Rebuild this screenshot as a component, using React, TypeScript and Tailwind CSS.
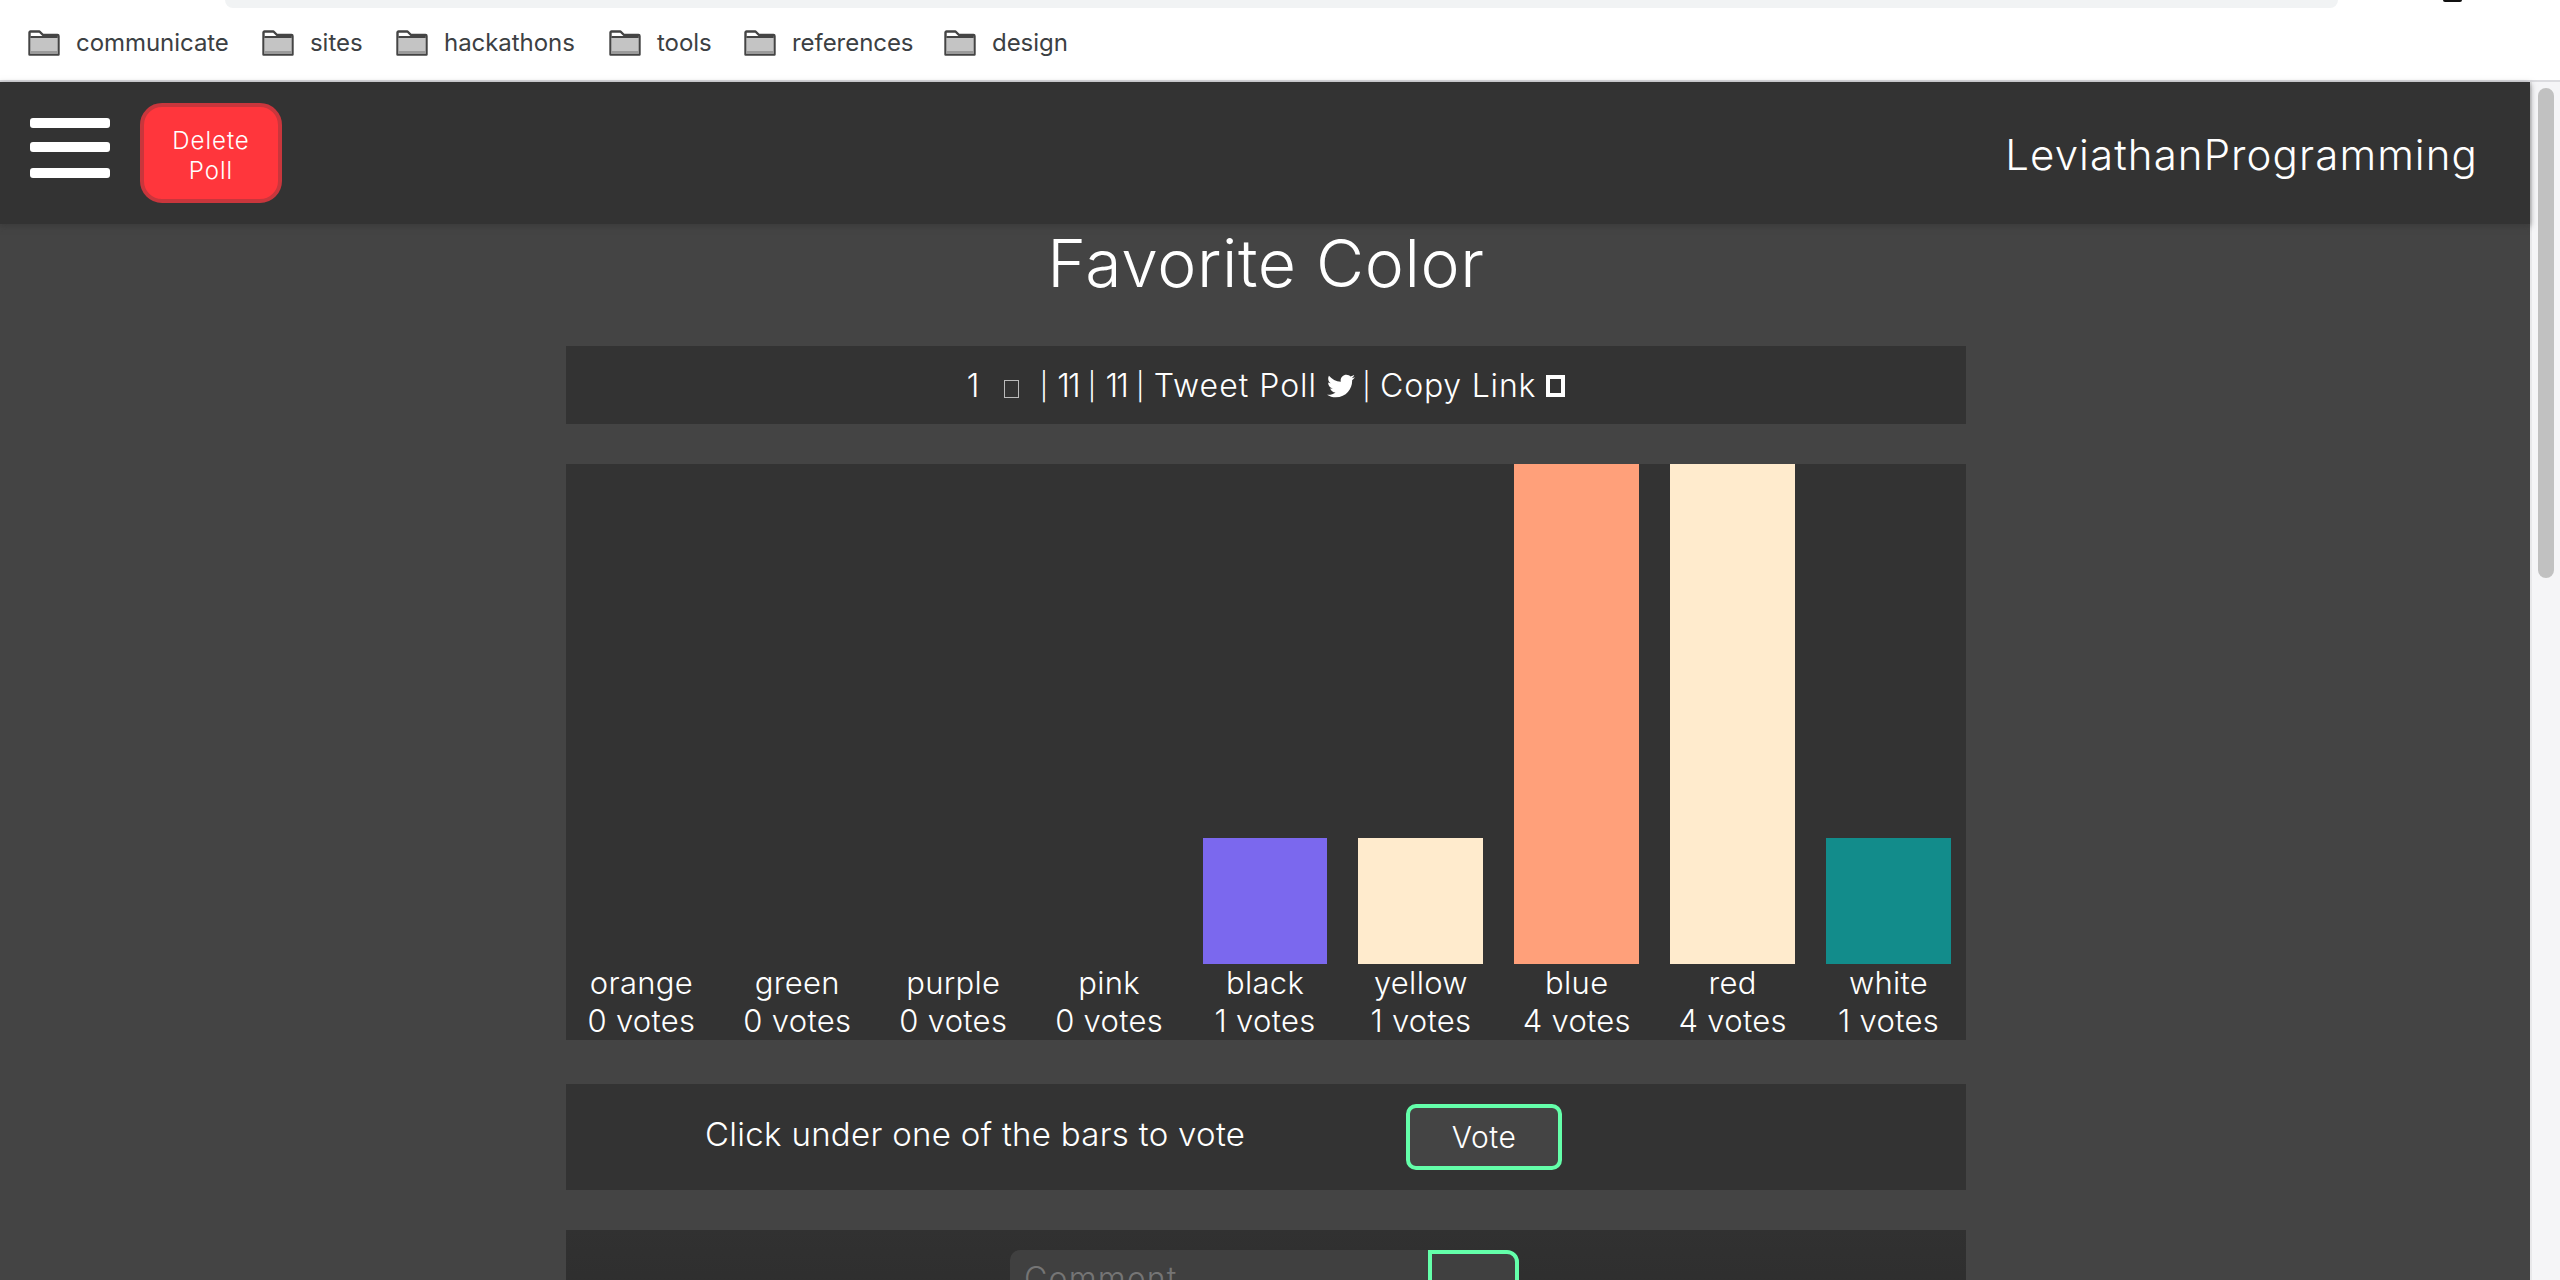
import { FaTwitter } from "react-icons/fa";

const bookmarks = [
  { label: "communicate", w: "w-[234px]" },
  { label: "sites", w: "w-[134px]" },
  { label: "hackathons", w: "w-[213px]" },
  { label: "tools", w: "w-[135px]" },
  { label: "references", w: "w-[200px]" },
  { label: "design", w: "w-[124px]" },
];

const bars = [
  { name: "orange", votes: 0, color: "bg-transparent", h: "h-0" },
  { name: "green", votes: 0, color: "bg-transparent", h: "h-0" },
  { name: "purple", votes: 0, color: "bg-transparent", h: "h-0" },
  { name: "pink", votes: 0, color: "bg-transparent", h: "h-0" },
  { name: "black", votes: 1, color: "bg-[#7b68ee]", h: "h-[126px]" },
  { name: "yellow", votes: 1, color: "bg-[#ffebcd]", h: "h-[126px]" },
  { name: "blue", votes: 4, color: "bg-[#ffa07a]", h: "h-[500px]" },
  { name: "red", votes: 4, color: "bg-[#ffebcd]", h: "h-[500px]" },
  { name: "white", votes: 1, color: "bg-[#128c8b]", h: "h-[126px]" },
];

function Folder() {
  return (
    <svg width="32" height="26" viewBox="0 0 32 26" className="shrink-0">
      <path d="M1.5 24.5V2.5a1 1 0 0 1 1-1h9l3.5 3.5h14.5a1 1 0 0 1 1 1v18.5z" fill="#fff" stroke="#444" strokeWidth="2.4" strokeLinejoin="round" />
      <rect x="2.5" y="8" width="27" height="16" fill="#c4c4c4" />
      <rect x="2.5" y="6" width="27" height="2" fill="#444" />
      <rect x="2.5" y="21" width="27" height="3" fill="#9a9a9a" />
    </svg>
  );
}

function Pipe() {
  return <span className="w-[3px] flex justify-center text-[27px] leading-none">|</span>;
}

export default function App() {
  return (
    <div className="w-[2560px] h-[1280px] overflow-hidden flex flex-col bg-white font-['Inter',sans-serif] font-light text-white">
      <div className="relative h-[82px] shrink-0 bg-white border-b-2 border-[#dcdce0]">
        <div className="absolute left-[225px] top-0 w-[2113px] h-[8px] bg-[#f1f3f4] rounded-b-[16px]" />
        <div className="absolute left-[2443px] top-0 w-[19px] h-[2px] bg-[#111] rounded-b-full" />
        <div className="flex items-center pl-[28px] h-[80px] pt-[6px] font-normal text-[24px] text-[#3c4043]">
          {bookmarks.map((b) => (
            <div key={b.label} className={`flex items-center gap-[16px] ${b.w}`}>
              <Folder />
              <span className="leading-none tracking-[-0.05px]">{b.label}</span>
            </div>
          ))}
        </div>
      </div>
      <div className="flex flex-1 min-h-0">
        <div className="flex-1 min-w-0 bg-[#444] flex flex-col">
          <div className="relative z-10 w-full h-[142px] shrink-0 bg-[#333] shadow-[0_2px_6px_rgba(51,51,51,0.6)] flex items-center justify-between pl-[30px] pr-[52px]">
            <div className="flex items-center gap-[30px]">
              <div className="flex flex-col w-[80px] pb-[10px]">
                <div className="h-[10px] rounded-[3px] bg-white" />
                <div className="h-[10px] mt-[14px] rounded-[3px] bg-white" />
                <div className="h-[10px] mt-[16px] rounded-[3px] bg-white" />
              </div>
              <button className="w-[142px] h-[100px] pt-[6px] rounded-[22px] border-[4px] border-[#c9363c] bg-[#ff363c] text-[24px] leading-[30px] tracking-[1px] font-light text-white">
                Delete<br />Poll
              </button>
            </div>
            <div className="text-[42px] leading-none pt-[4px] tracking-[1.1px]">LeviathanProgramming</div>
          </div>
          <div className="flex-1 min-h-0 flex flex-col items-center pl-[2px]">
            <h1 className="h-[122px] shrink-0 text-[66px] leading-[78px] tracking-[0.65px] font-light">Favorite Color</h1>
            <div className="w-[1400px] h-[78px] shrink-0 bg-[#333] flex items-center justify-center text-[32px] pt-[2px]">
              <span>1</span>
              <span className="inline-block w-[15px] h-[18px] border border-[#bbb] ml-[25px] mr-[23px] mt-[6px]" />
              <div className="flex items-center gap-[12px]">
                <Pipe />
                <span className="tracking-[-2px]">11</span>
                <Pipe />
                <span className="tracking-[-2px]">11</span>
                <Pipe />
                <span className="tracking-[1px]">Tweet Poll</span>
              </div>
              <FaTwitter className="mx-[10px] text-[28px]" />
              <Pipe />
              <span className="ml-[12px] tracking-[0.8px]">Copy Link</span>
              <span className="inline-block w-[19px] h-[22px] border-[4px] border-white ml-[10px]" />
            </div>
            <div className="w-[1400px] h-[576px] mt-[40px] shrink-0 bg-[#333] grid grid-cols-9 gap-x-[31px] pl-[13px] pr-[15px] items-end">
              {bars.map((b) => (
                <div key={b.name} className="flex flex-col items-center">
                  <div className={`w-full ${b.h} ${b.color}`} />
                  <div className="h-[76px] text-[31px] leading-[38px] tracking-[0.3px] text-center whitespace-nowrap">
                    {b.name}
                    <br />
                    {b.votes} votes
                  </div>
                </div>
              ))}
            </div>
            <div className="w-[1400px] h-[106px] mt-[44px] shrink-0 bg-[#333] flex items-center pl-[139px]">
              <span className="text-[33px] tracking-[0.3px] w-[701px] pb-[4px] whitespace-nowrap">Click under one of the bars to vote</span>
              <button className="w-[156px] h-[66px] rounded-[10px] border-[4px] border-[#64ffaa] bg-[#444] text-[30px] tracking-[0.5px] font-light">Vote</button>
            </div>
            <div className="w-[1400px] flex-1 mt-[40px] shrink-0 bg-linear-to-b from-[#313131] to-[#2d2d2d] flex justify-center pt-[20px] pr-[3px]">
              <div className="w-[418px] h-[70px] rounded-tl-[10px] bg-[#404040] pl-[14px] text-[32px] tracking-[1.2px] leading-[58px] text-[#757575]">Comment</div>
              <div className="w-[91px] h-[70px] rounded-tr-[12px] border-[4px] border-[#64ffaa] bg-[#404040]" />
            </div>
          </div>
        </div>
        <div className="w-[30px] shrink-0 bg-[#f5f5f7] border-l-2 border-[#e8e8ea] pl-[6px] pt-[6px]">
          <div className="w-[16px] h-[490px] rounded-full bg-[#c1c1c1]" />
        </div>
      </div>
    </div>
  );
}
